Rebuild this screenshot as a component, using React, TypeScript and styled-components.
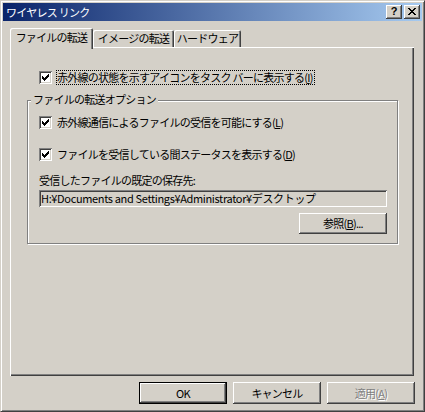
import React from "react";
import styled, { createGlobalStyle } from "styled-components";

const Global = createGlobalStyle`
  html, body { margin: 0; padding: 0; background: #D4D0C8; }
  * { box-sizing: border-box; }
  body {
    font-family: "Noto Sans CJK JP", "Noto Sans", sans-serif;
    font-size: 11px;
    letter-spacing: -0.75px;
    color: #000;
  }
`;

const Window = styled.div`
  width: 425px;
  height: 412px;
  background: #d4d0c8;
  border: 1px solid;
  border-color: #d4d0c8 #404040 #404040 #d4d0c8;
  box-shadow: inset 1px 1px #fff, inset -1px -1px #808080;
  padding: 2px;
  display: flex;
  flex-direction: column;
`;

const TitleBar = styled.div`
  height: 18px;
  flex: none;
  background: linear-gradient(to right, #0a246a, #a6caf0);
  display: flex;
  align-items: center;
  padding: 0 2px 0 3px;
  color: #fff;
`;

const TitleText = styled.div`
  flex: 1;
  line-height: 14px;
`;

const TitleButtons = styled.div`
  display: flex;
  gap: 2px;
`;

const CaptionButton = styled.div`
  width: 16px;
  height: 14px;
  background: #d4d0c8;
  box-shadow: inset -1px -1px #404040, inset 1px 1px #fff, inset -2px -2px #808080;
  display: flex;
  align-items: center;
  justify-content: center;
  color: #000;
  font-family: "Liberation Sans", Arial, sans-serif;
  font-weight: bold;
  font-size: 11px;
  letter-spacing: 0;
  line-height: 11px;
  padding-bottom: 1px;
`;

const Body = styled.div`
  flex: 1;
  display: flex;
  flex-direction: column;
  padding: 7px 8px 0 7px;
`;

const TabStrip = styled.div`
  height: 21px;
  margin-bottom: -2px;
  display: flex;
  align-items: flex-end;
  position: relative;
  z-index: 1;
`;

const Tab = styled.div<{ $active?: boolean; $w: number }>`
  width: ${(p) => p.$w}px;
  height: ${(p) => (p.$active ? 21 : 17)}px;
  margin-bottom: ${(p) => (p.$active ? 0 : 2)}px;
  background: #d4d0c8;
  border-radius: 2px 2px 0 0;
  box-shadow: inset 1px 1px #fff, inset -1px 0 #404040, inset -2px 0 #808080;
  display: flex;
  justify-content: center;
  padding-top: ${(p) => (p.$active ? 2 : 1)}px;
  line-height: 14px;
  white-space: nowrap;
`;

const Panel = styled.div`
  height: 329px;
  background: #d4d0c8;
  box-shadow: inset 1px 1px #fff, inset -1px -1px #404040, inset -2px -2px #808080;
  padding: 23px 0 0 17px;
  display: flex;
  flex-direction: column;
  align-items: flex-start;
`;

const CheckRow = styled.div<{ $mt?: number; $ml?: number }>`
  display: flex;
  align-items: center;
  height: 15px;
  gap: 4px;
  margin-top: ${(p) => p.$mt ?? 0}px;
  margin-left: ${(p) => p.$ml ?? 0}px;
`;

const Box = styled.div`
  width: 13px;
  height: 13px;
  background: #fff;
  box-shadow: inset 1px 1px #808080, inset -1px -1px #fff, inset 2px 2px #404040,
    inset -2px -2px #d4d0c8;
  display: flex;
  align-items: center;
  justify-content: center;
`;

const CheckLabel = styled.div<{ $focus?: boolean }>`
  line-height: 13px;
  padding: 0 1px 0 0;
  border: 1px ${(p) => (p.$focus ? "dotted #000" : "solid transparent")};
  white-space: nowrap;
`;

const Group = styled.div`
  position: relative;
  width: 371px;
  margin-top: 15px;
  border: 1px solid #808080;
  box-shadow: 1px 1px #fff, inset 1px 1px #fff;
  padding: 14px 0 9px 11px;
  display: flex;
  flex-direction: column;
  align-items: flex-start;
`;

const Legend = styled.div`
  position: absolute;
  top: -8px;
  left: 3px;
  padding: 0 2px;
  background: #d4d0c8;
  line-height: 13px;
  white-space: nowrap;
`;

const PathLabel = styled.div`
  margin-top: 12px;
  line-height: 13px;
`;

const FieldBlock = styled.div`
  width: 348px;
  margin-top: 3px;
  display: flex;
  flex-direction: column;
  align-items: flex-end;
`;

const Field = styled.div`
  width: 100%;
  height: 17px;
  background: #d4d0c8;
  box-shadow: inset 1px 1px #808080, inset -1px -1px #fff, inset 2px 2px #404040,
    inset -2px -2px #d4d0c8;
  padding: 2px 2px 0 2px;
  line-height: 13px;
  letter-spacing: -0.35px;
  white-space: nowrap;
  overflow: hidden;
`;

const Button = styled.div<{ $default?: boolean; $disabled?: boolean }>`
  width: 88px;
  height: 22px;
  background: #d4d0c8;
  border: 1px solid ${(p) => (p.$default ? "#000" : "transparent")};
  box-shadow: inset -1px -1px #404040, inset 1px 1px #fff, inset -2px -2px #808080;
  display: flex;
  align-items: center;
  justify-content: center;
  line-height: 13px;
  color: ${(p) => (p.$disabled ? "#808080" : "#000")};
  text-shadow: ${(p) => (p.$disabled ? "1px 1px 0 #fff" : "none")};
  white-space: nowrap;
`;

const PlainButton = styled(Button)`
  border: none;
`;

const BrowseButton = styled(PlainButton)`
  margin-top: 6px;
  height: 21px;
`;

const ButtonRow = styled.div`
  display: flex;
  justify-content: flex-end;
  gap: 6px;
  margin-top: 6px;
  margin-right: -1px;
`;

const CHECK = ["......x", ".....xx", "x...xxx", "xx.xxx.", "xxxxx..", ".xxx...", "..x...."];
const CROSS = ["xx....xx", ".xx..xx.", "..xxxx..", "...xx...", "..xxxx..", ".xx..xx.", "xx....xx"];

const Pixels: React.FC<{ rows: string[] }> = ({ rows }) => (
  <svg width={rows[0].length} height={rows.length} shapeRendering="crispEdges">
    {rows.flatMap((r, y) =>
      r
        .split("")
        .map((c, x) =>
          c === "x" ? <rect key={`${x}-${y}`} x={x} y={y} width={1} height={1} fill="#000" /> : null
        )
    )}
  </svg>
);

const Check = () => (
  <Box>
    <Pixels rows={CHECK} />
  </Box>
);

export default function App() {
  return (
    <>
      <Global />
      <Window>
        <TitleBar>
          <TitleText>ワイヤレス リンク</TitleText>
          <TitleButtons>
            <CaptionButton>?</CaptionButton>
            <CaptionButton>
              <Pixels rows={CROSS} />
            </CaptionButton>
          </TitleButtons>
        </TitleBar>
        <Body>
          <TabStrip>
            <Tab $active $w={83}>ファイルの転送</Tab>
            <Tab $w={81}>イメージの転送</Tab>
            <Tab $w={67}>ハードウェア</Tab>
          </TabStrip>
          <Panel>
            <CheckRow $ml={12}>
              <Check />
              <CheckLabel $focus>
                赤外線の状態を示すアイコンをタスク バーに表示する(<u>I</u>)
              </CheckLabel>
            </CheckRow>
            <Group>
              <Legend>ファイルの転送オプション</Legend>
              <CheckRow>
                <Check />
                <CheckLabel>
                  赤外線通信によるファイルの受信を可能にする(<u>L</u>)
                </CheckLabel>
              </CheckRow>
              <CheckRow $mt={17}>
                <Check />
                <CheckLabel>
                  ファイルを受信している間ステータスを表示する(<u>D</u>)
                </CheckLabel>
              </CheckRow>
              <PathLabel>受信したファイルの既定の保存先:</PathLabel>
              <FieldBlock>
                <Field>H:¥Documents and Settings¥Administrator¥デスクトップ</Field>
                <BrowseButton>
                  参照(<u>B</u>)...
                </BrowseButton>
              </FieldBlock>
            </Group>
          </Panel>
          <ButtonRow>
            <Button $default>OK</Button>
            <PlainButton>キャンセル</PlainButton>
            <PlainButton $disabled>
              適用(<u>A</u>)
            </PlainButton>
          </ButtonRow>
        </Body>
      </Window>
    </>
  );
}
